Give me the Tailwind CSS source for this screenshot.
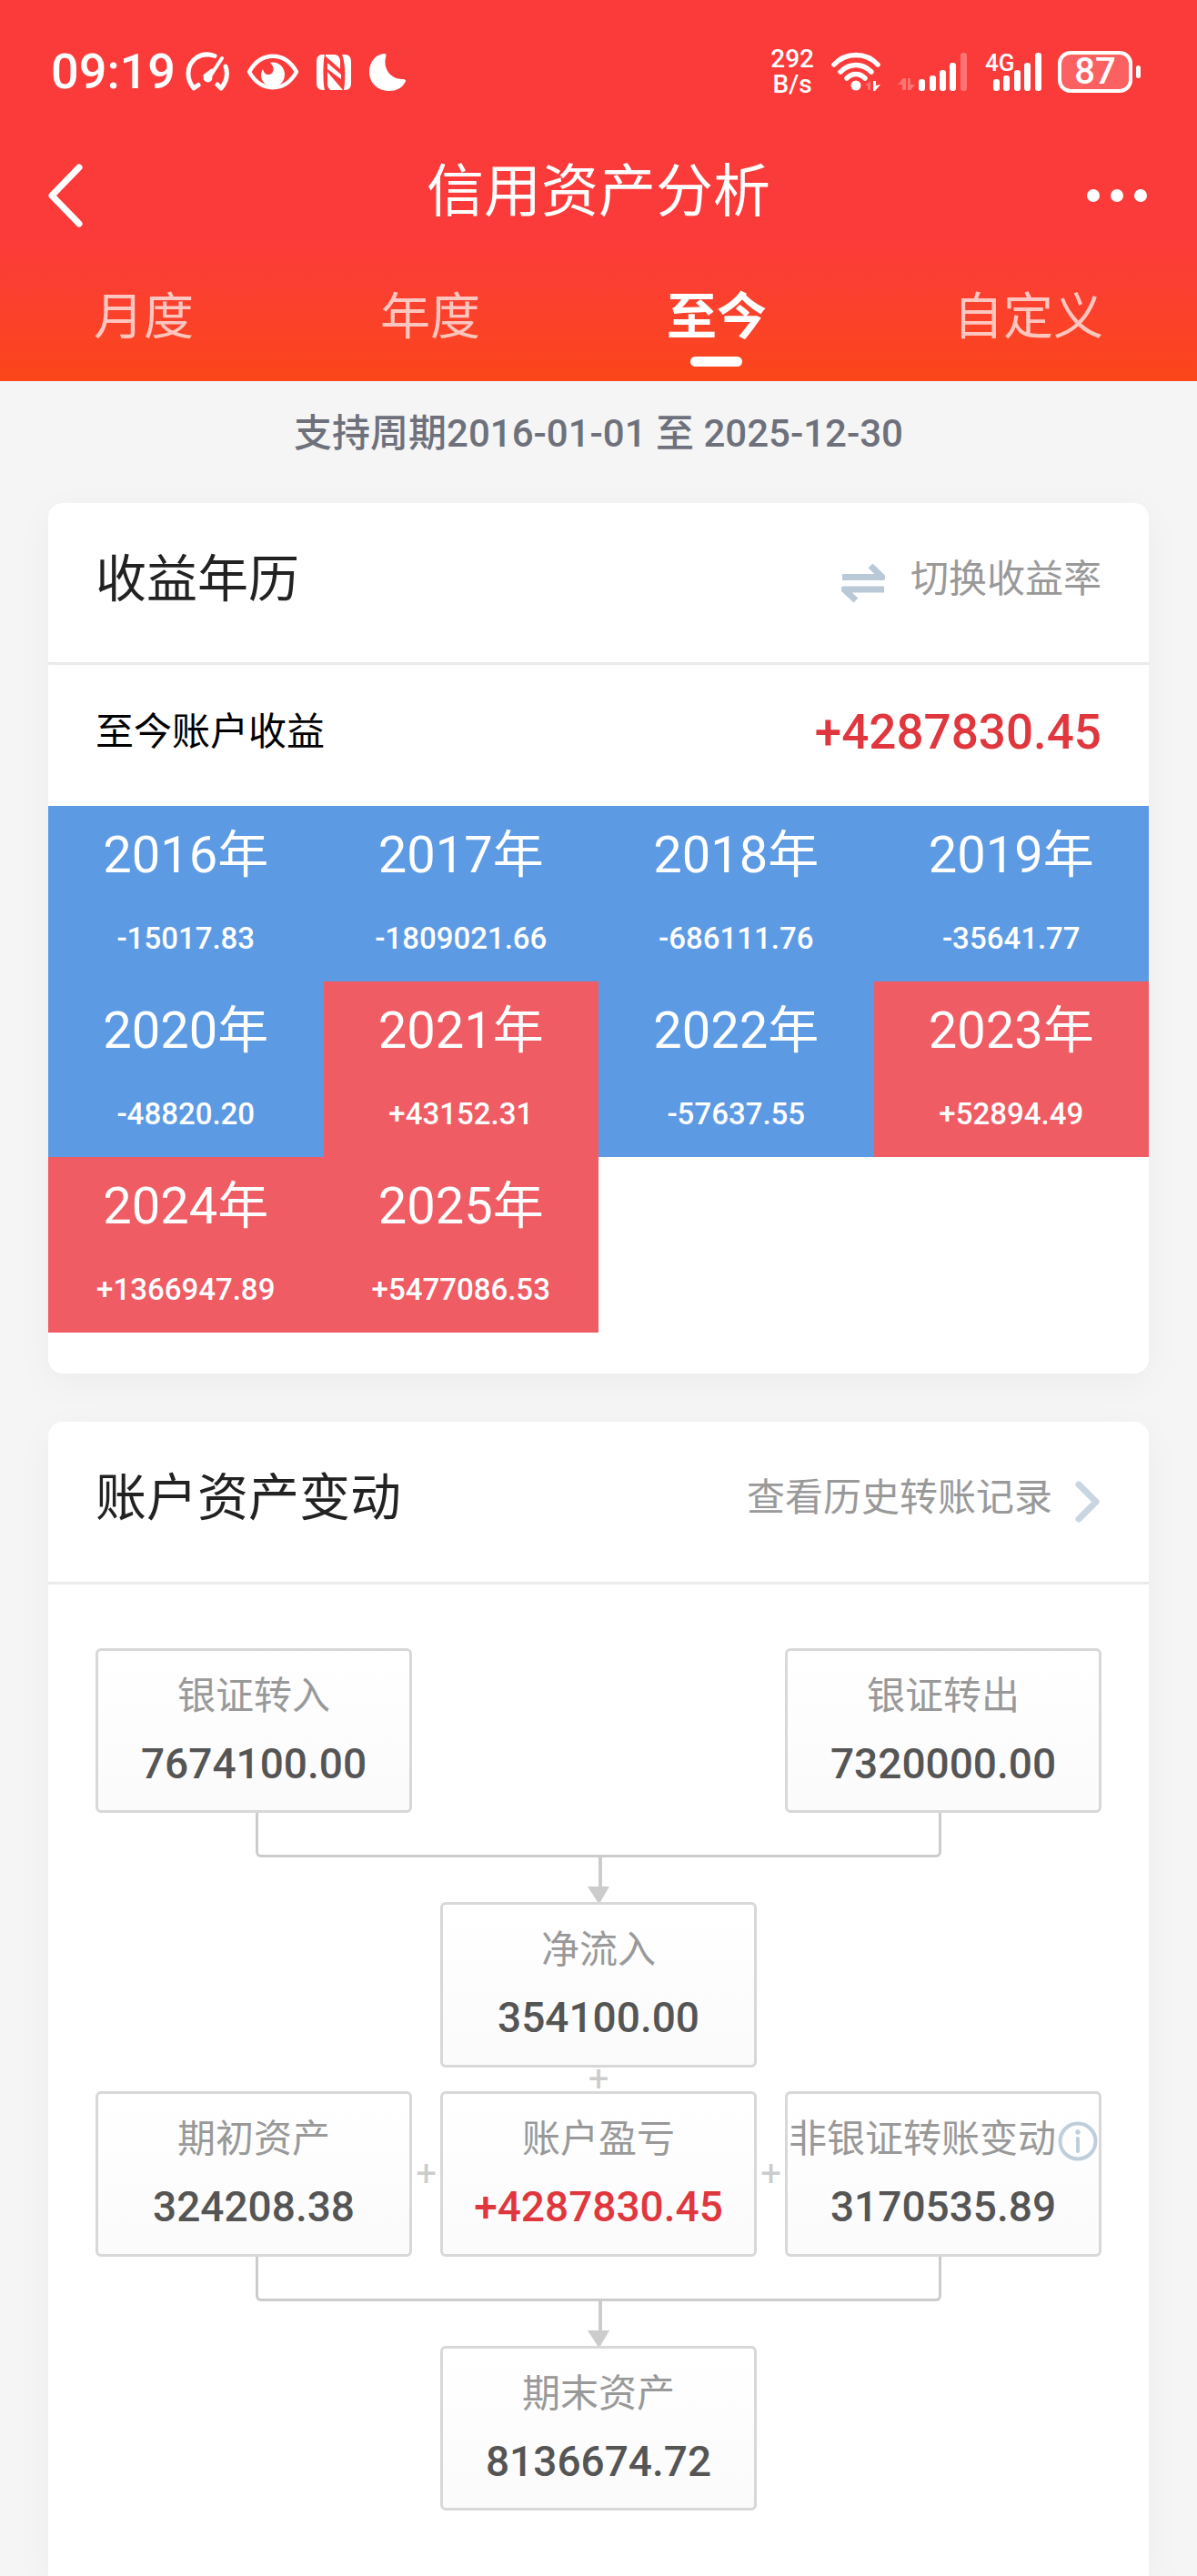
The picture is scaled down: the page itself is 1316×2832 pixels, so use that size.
<!DOCTYPE html>
<html lang="zh-CN">

<head>
  <meta charset="UTF-8">
  <meta name="viewport" content="width=device-width, initial-scale=1.0">
  <title>信用资产分析</title>
  <script src="https://cdn.jsdelivr.net/npm/@tailwindcss/browser@4"></script>
</head>

<body class="bg-[#f5f5f5] min-h-screen flex flex-col font-['Roboto','Noto_Sans_CJK_SC',sans-serif]">

  <header class="bg-linear-to-b from-[#fb3a3a] from-60% to-[#fb4619] text-white">
    <!-- status bar -->
    <div class="h-[158px] pl-14 pr-[62px] flex items-center justify-between">
      <div class="flex items-center gap-[18px]">
        <span class="text-[54px] leading-[54px] font-medium -mr-2">09:19</span>
        <svg class="w-[50px] h-[44px]" viewBox="0 0 50 44" fill="none" stroke="currentColor" stroke-width="5" stroke-linecap="round" stroke-linejoin="round">
          <path d="M33 4.500C18 -1 4 9 4 24c0 6 2 11 6 16l5-3.500" />
          <path d="M45 16c3 9 1 17-5 24l-4-4" />
          <path d="M41 7L26 30" stroke-width="4" />
          <path d="M30 20l-8 6" stroke-width="3" />
          <circle cx="25.500" cy="28.500" r="3" fill="currentColor" stroke-width="4" />
        </svg>
        <svg class="w-[58px] h-[40px]" viewBox="0 0 58 40">
          <path d="M3 20C16-3 42-3 55 20C42 43 16 43 3 20Z" fill="none" stroke="currentColor" stroke-width="4.500" stroke-linejoin="round" />
          <path d="M26 10c8-2 16 4 16 13c0 8-6 13-13 13s-13-5-13-12c0-3 1-5 2-7c1 4 3 6 6 6c6 0 8-8 2-13Z" fill="currentColor" />
        </svg>
        <svg class="w-[40px] h-[41px]" viewBox="0 0 40 41" fill="currentColor">
          <path d="M7 1h3c-2 8-2 30 0 39H8c-5 0-7-3-7-8V9c0-5 2-8 6-8Z" />
          <path d="M29 1h3c5 0 7 3 7 8v23c0 5-2 8-7 8h-1c2-9 2-30-2-39Z" />
          <path d="M11 1h10c3 0 5 2 6 6v10L11 3Z" />
          <path d="M13 10l15 13v5L13 17Z" />
          <path d="M13 20l17 20H18c-3 0-4-2-5-6Z" />
        </svg>
        <svg class="w-[42px] h-[43px]" viewBox="0 0 42 43" fill="currentColor">
          <path d="M17 1c3 0 3 2 2 4c-3 13 6 24 18 24c4 0 5 1 3 4C37 39 30 42 23 42C10 42 1 33 1 21C1 10 8 2 17 1Z" />
        </svg>
      </div>

      <div class="flex items-center gap-[18px]">
        <div class="flex flex-col text-[28px] leading-[28px] font-medium text-center">
          <span>292</span>
          <span>B/s</span>
        </div>
        <svg class="w-[56px] h-[44px]" viewBox="0 0 56 44" fill="none" stroke="currentColor" stroke-width="5.500" stroke-linecap="round">
          <path d="M4 14C17 0 39 0 52 14" />
          <path d="M11 22c10-10 24-10 34 0" />
          <path d="M18 29c6-6 14-6 20 0" />
          <circle cx="28" cy="37" r="5.500" fill="currentColor" stroke="none" />
          <path d="M44 32v10h-3v-5h-3Z" fill="currentColor" stroke="none" opacity=".3" />
          <path d="M47 32h3v5l5-1l-6 7h-2Z" fill="currentColor" stroke="none" />
        </svg>
        <svg class="w-[78px] h-[44px]" viewBox="0 0 78 44" fill="currentColor">
          <path d="M0 36l6-7h3v13H5v-6Z M11 29h3v7h5l-5 6h-3Z" opacity=".3" />
          <rect x="23" y="30" width="7" height="13" rx="3" />
          <rect x="35" y="26" width="7" height="17" rx="3" />
          <rect x="46" y="20" width="7" height="23" rx="3" />
          <rect x="57" y="12" width="7" height="31" rx="3" />
          <rect x="69" y="1" width="7" height="42" rx="3" opacity=".3" />
        </svg>
        <div class="relative">
          <svg class="w-[62px] h-[44px]" viewBox="0 0 62 44" fill="currentColor">
            <rect x="9" y="30" width="7" height="13" rx="3" />
            <rect x="20" y="26" width="7" height="17" rx="3" />
            <rect x="32" y="20" width="7" height="23" rx="3" />
            <rect x="43" y="12" width="7" height="31" rx="3" />
            <rect x="55" y="1" width="7" height="42" rx="3" />
          </svg>
          <span class="absolute left-0 top-0 text-[26px] leading-[24px] font-medium">4G</span>
        </div>
        <div class="flex items-center gap-1">
          <div class="w-[82px] h-[46px] border-4 border-white rounded-[14px] bg-white/20 flex items-center justify-center text-[40px] leading-[38px] font-medium">87</div>
          <div class="w-[5px] h-[14px] bg-white rounded-full"></div>
        </div>
      </div>
    </div>

    <!-- title bar -->
    <div class="h-[106px] px-[50px] flex items-center justify-between">
      <button type="button" aria-label="返回" class="w-16 pt-2">
        <svg class="w-[44px] h-[72px]" viewBox="0 0 44 72" fill="none" stroke="currentColor" stroke-width="7" stroke-linecap="round" stroke-linejoin="round">
          <path d="M37 5L7 36l30 31" />
        </svg>
      </button>
      <h1 class="text-[63px] leading-[72px]">信用资产分析</h1>
      <button type="button" aria-label="更多" class="w-16 pt-2 flex justify-end">
        <svg class="w-[72px] h-[16px] shrink-0" viewBox="0 0 72 16" fill="currentColor">
          <circle cx="8" cy="8" r="7" />
          <circle cx="34" cy="8" r="7" />
          <circle cx="60" cy="8" r="7" />
        </svg>
      </button>
    </div>

    <nav class="px-[103px] pt-11 pb-4 flex justify-between text-[55px] leading-[80px] text-white/70">
      <button type="button" class="flex flex-col items-center">月度</button>
      <button type="button" class="flex flex-col items-center">年度</button>
      <button type="button" class="flex flex-col items-center gap-1 font-bold text-white">
        至今
        <span class="w-[57px] h-[11px] rounded-full bg-white"></span>
      </button>
      <button type="button" class="flex flex-col items-center">自定义</button>
    </nav>
  </header>

  <main class="flex-1 flex flex-col px-[53px]">
    <p class="pt-7 pb-[46px] text-center text-[42px] leading-[60px] font-medium text-[#6e717c]">支持周期2016-01-01 至 2025-12-30</p>

    <!-- yearly profit -->
    <section class="bg-white rounded-2xl pb-[45px] shadow-[0_10px_40px_rgba(0,0,0,0.04)]">
      <div class="h-[178px] px-[52px] pb-2 border-b-3 border-[#eaeaea] flex items-center justify-between">
        <h2 class="text-[56px] leading-[64px] text-[#222222]">收益年历</h2>
        <button type="button" class="flex items-center gap-7 text-[42px] leading-[60px] text-[#999999]">
          <svg class="w-[48px] h-[44px] mt-2" viewBox="0 0 48 44" fill="none" stroke="#b9c9d8" stroke-width="7" stroke-linejoin="round">
            <path d="M1 15.500h44L32 3" />
            <path d="M47 29H3l13 12" />
          </svg>
          切换收益率
        </button>
      </div>

      <div class="h-[155px] px-[52px] pb-2 flex items-center justify-between">
        <span class="text-[42px] leading-[60px] text-black">至今账户收益</span>
        <span class="text-[53px] leading-[60px] font-medium text-[#e0373e]">+4287830.45</span>
      </div>

      <ul class="grid grid-cols-4 text-center text-white">
        <li class="bg-[#5c9ae4] h-[193px] pt-[22px] flex flex-col gap-10">
          <span class="text-[56px] leading-[64px]">2016年</span>
          <span class="text-[33px] leading-[40px] font-medium">-15017.83</span>
        </li>
        <li class="bg-[#5c9ae4] h-[193px] pt-[22px] flex flex-col gap-10">
          <span class="text-[56px] leading-[64px]">2017年</span>
          <span class="text-[33px] leading-[40px] font-medium">-1809021.66</span>
        </li>
        <li class="bg-[#5c9ae4] h-[193px] pt-[22px] flex flex-col gap-10">
          <span class="text-[56px] leading-[64px]">2018年</span>
          <span class="text-[33px] leading-[40px] font-medium">-686111.76</span>
        </li>
        <li class="bg-[#5c9ae4] h-[193px] pt-[22px] flex flex-col gap-10">
          <span class="text-[56px] leading-[64px]">2019年</span>
          <span class="text-[33px] leading-[40px] font-medium">-35641.77</span>
        </li>
        <li class="bg-[#5c9ae4] h-[193px] pt-[22px] flex flex-col gap-10">
          <span class="text-[56px] leading-[64px]">2020年</span>
          <span class="text-[33px] leading-[40px] font-medium">-48820.20</span>
        </li>
        <li class="bg-[#ef5c63] h-[193px] pt-[22px] flex flex-col gap-10">
          <span class="text-[56px] leading-[64px]">2021年</span>
          <span class="text-[33px] leading-[40px] font-medium">+43152.31</span>
        </li>
        <li class="bg-[#5c9ae4] h-[193px] pt-[22px] flex flex-col gap-10">
          <span class="text-[56px] leading-[64px]">2022年</span>
          <span class="text-[33px] leading-[40px] font-medium">-57637.55</span>
        </li>
        <li class="bg-[#ef5c63] h-[193px] pt-[22px] flex flex-col gap-10">
          <span class="text-[56px] leading-[64px]">2023年</span>
          <span class="text-[33px] leading-[40px] font-medium">+52894.49</span>
        </li>
        <li class="bg-[#ef5c63] h-[193px] pt-[22px] flex flex-col gap-10">
          <span class="text-[56px] leading-[64px]">2024年</span>
          <span class="text-[33px] leading-[40px] font-medium">+1366947.89</span>
        </li>
        <li class="bg-[#ef5c63] h-[193px] pt-[22px] flex flex-col gap-10">
          <span class="text-[56px] leading-[64px]">2025年</span>
          <span class="text-[33px] leading-[40px] font-medium">+5477086.53</span>
        </li>
      </ul>
    </section>

    <!-- asset changes -->
    <section class="flex-1 mt-[53px] bg-white rounded-t-2xl shadow-[0_10px_40px_rgba(0,0,0,0.04)]">
      <div class="h-[179px] px-[52px] pb-2 border-b-3 border-[#eaeaea] flex items-center justify-between">
        <h2 class="text-[56px] leading-[64px] text-[#222222]">账户资产变动</h2>
        <a href="#" class="flex items-center gap-6 text-[42px] leading-[60px] text-[#999999]">
          查看历史转账记录
          <svg class="w-[30px] h-[48px] mt-2" viewBox="0 0 30 48" fill="none" stroke="#c9d6e2" stroke-width="7" stroke-linecap="round" stroke-linejoin="round">
            <path d="M5 5l19 19L5 43" />
          </svg>
        </a>
      </div>

      <div class="px-[52px] pt-[70px] pb-[71px] text-center">
        <div class="flex justify-between">
          <div class="w-[348px] h-[181px] pt-[22px] border-3 border-[#d8d8d8] rounded-md bg-linear-to-b from-white to-[#fbfbfb] flex flex-col gap-[18px]">
            <span class="text-[42px] leading-[56px] text-[#999999]">银证转入</span>
            <span class="text-[46px] leading-[56px] font-medium text-[#555555]">7674100.00</span>
          </div>
          <div class="w-[348px] h-[181px] pt-[22px] border-3 border-[#d8d8d8] rounded-md bg-linear-to-b from-white to-[#fbfbfb] flex flex-col gap-[18px]">
            <span class="text-[42px] leading-[56px] text-[#999999]">银证转出</span>
            <span class="text-[46px] leading-[56px] font-medium text-[#555555]">7320000.00</span>
          </div>
        </div>

        <div class="flex flex-col items-center px-[176px]">
          <div class="w-full h-[49px] border-3 border-t-0 border-[#cccccc] rounded-b-md"></div>
          <svg class="w-[24px] h-[49px]" viewBox="0 0 24 49" fill="#cccccc">
            <path d="M12 0h4v40h-4Z M0 32h24L14 49h-3Z" />
          </svg>
        </div>

        <div class="flex flex-col items-center">
          <div class="w-[348px] h-[182px] pt-[22px] border-3 border-[#d8d8d8] rounded-md bg-linear-to-b from-white to-[#fbfbfb] flex flex-col gap-[18px]">
            <span class="text-[42px] leading-[56px] text-[#999999]">净流入</span>
            <span class="text-[46px] leading-[56px] font-medium text-[#555555]">354100.00</span>
          </div>
          <span class="text-[40px] leading-[26px] text-[#cccccc]">+</span>
        </div>

        <div class="flex items-center">
          <div class="flex-1 h-[182px] pt-[22px] border-3 border-[#d8d8d8] rounded-md bg-linear-to-b from-white to-[#fbfbfb] flex flex-col gap-[18px]">
            <span class="text-[42px] leading-[56px] text-[#999999]">期初资产</span>
            <span class="text-[46px] leading-[56px] font-medium text-[#555555]">324208.38</span>
          </div>
          <span class="w-[31px] text-[40px] leading-[26px] text-[#cccccc]">+</span>
          <div class="flex-1 h-[182px] pt-[22px] border-3 border-[#d8d8d8] rounded-md bg-linear-to-b from-white to-[#fbfbfb] flex flex-col gap-[18px]">
            <span class="text-[42px] leading-[56px] text-[#999999]">账户盈亏</span>
            <span class="text-[46px] leading-[56px] font-medium text-[#e0373e]">+4287830.45</span>
          </div>
          <span class="w-[31px] text-[40px] leading-[26px] text-[#cccccc]">+</span>
          <div class="flex-1 h-[182px] pt-[22px] border-3 border-[#d8d8d8] rounded-md bg-linear-to-b from-white to-[#fbfbfb] flex flex-col gap-[18px]">
            <span class="flex items-center justify-center gap-[2px] text-[42px] leading-[56px] whitespace-nowrap text-[#999999]">
              非银证转账变动
              <button type="button" aria-label="说明" class="h-11 mt-1">
                <svg class="w-[44px] h-[44px]" viewBox="0 0 44 44" fill="none" stroke="#bfcedb" stroke-width="4">
                  <circle cx="22" cy="22" r="19.500" />
                  <path d="M22 19v14" stroke-linecap="round" />
                  <circle cx="22" cy="12" r="2.700" fill="#bfcedb" stroke="none" />
                </svg>
              </button>
            </span>
            <span class="text-[46px] leading-[56px] font-medium text-[#555555]">3170535.89</span>
          </div>
        </div>

        <div class="flex flex-col items-center px-[176px]">
          <div class="w-full h-[49px] border-3 border-t-0 border-[#cccccc] rounded-b-md"></div>
          <svg class="w-[24px] h-[49px]" viewBox="0 0 24 49" fill="#cccccc">
            <path d="M12 0h4v40h-4Z M0 32h24L14 49h-3Z" />
          </svg>
        </div>

        <div class="flex justify-center">
          <div class="w-[348px] h-[181px] pt-[22px] border-3 border-[#d8d8d8] rounded-md bg-linear-to-b from-white to-[#fbfbfb] flex flex-col gap-[18px]">
            <span class="text-[42px] leading-[56px] text-[#999999]">期末资产</span>
            <span class="text-[46px] leading-[56px] font-medium text-[#555555]">8136674.72</span>
          </div>
        </div>
      </div>
    </section>
  </main>

</body>

</html>
